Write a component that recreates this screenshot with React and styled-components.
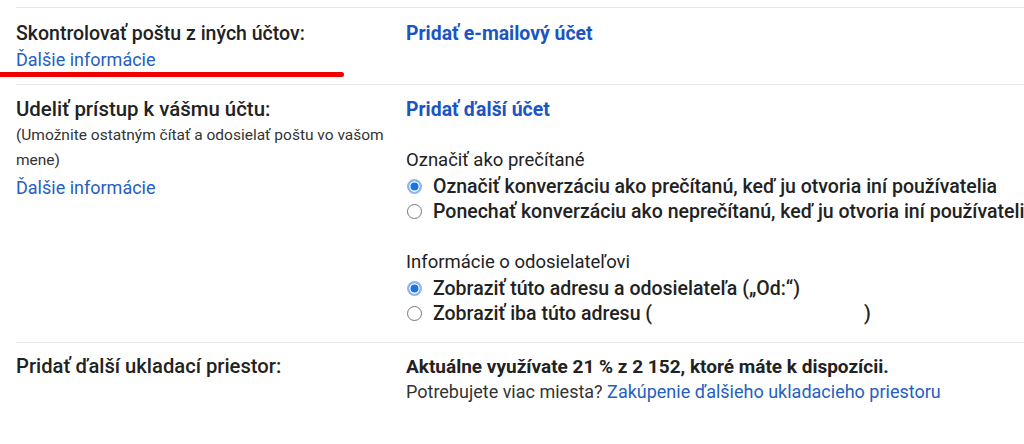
import React from "react";
import styled, { createGlobalStyle } from "styled-components";

const GlobalStyle = createGlobalStyle`
  html, body {
    margin: 0;
    padding: 0;
    background: #ffffff;
  }
  body {
    font-family: Roboto, "Noto Sans", Arial, sans-serif;
    color: #202124;
    overflow: hidden;
  }
`;

const Page = styled.div`
  position: relative;
  width: 1024px;
  height: 444px;
  overflow: hidden;
  padding-top: 7px;
  box-sizing: border-box;
`;

const Row = styled.div`
  display: grid;
  grid-template-columns: 390px 1fr;
  margin-left: 16px;
  border-top: 1px solid #e6e6e6;
  padding: ${(p) => p.$pad || "13px 0 13px 0"};
  font-size: 18px;
  line-height: 25.5px;
`;

const Label = styled.div`
  font-size: ${(p) => p.$size || "19.6px"};
  font-weight: 500;
  color: #222;
  white-space: nowrap;
`;

const Note = styled.div`
  font-size: 15.5px;
  line-height: 25.5px;
  color: #333;
  width: 380px;
`;

const InfoLink = styled.a`
  display: block;
  color: #2460c0;
  text-decoration: none;
  font-size: 18px;
  margin-top: ${(p) => p.$top || "0"};
`;

const Side = styled.div`
  display: flex;
  flex-direction: column;
  white-space: nowrap;
`;

const ActionLink = styled.a`
  color: #1a55c2;
  font-size: 19.4px;
  font-weight: 700;
  text-decoration: none;
`;

const Group = styled.div`
  margin-top: 25.5px;
`;

const GroupTitle = styled.div`
  color: #222;
  font-size: 18.5px;
`;

const Option = styled.label`
  display: flex;
  align-items: center;
  gap: 11px;
  padding-left: 1px;
  font-size: 19.5px;
  font-weight: 500;
  color: #222;
`;

const Radio = styled.span`
  width: 15px;
  height: 15px;
  border-radius: 50%;
  box-sizing: border-box;
  flex: none;
  border: ${(p) => (p.$on ? "2px solid #8fb6ee" : "1px solid #777")};
  background: ${(p) => (p.$on ? "#1a73e8" : "#fff")};
  box-shadow: ${(p) => (p.$on ? "inset 0 0 0 1.5px #fff" : "none")};
`;

const Strong = styled.div`
  font-size: 19px;
  font-weight: 700;
  color: #222;
`;

const Plain = styled.div`
  color: #333;
  font-size: 18px;
`;

const BuyLink = styled.a`
  color: #2460c0;
  text-decoration: none;
`;

const Gap = styled.span`
  display: inline-block;
  width: 190px;
`;

const Marker = styled.div`
  position: absolute;
  left: 0;
  top: 72px;
  width: 344px;
  height: 5px;
  background: #f20000;
  border-radius: 0 3px 3px 0;
`;

export default function App() {
  return (
    <Page>
      <GlobalStyle />
      <Row $pad="13px 0 12px 0">
        <div>
          <Label $size="19.5px">Skontrolovať poštu z iných účtov:</Label>
          <InfoLink>Ďalšie informácie</InfoLink>
        </div>
        <Side>
          <div>
            <ActionLink>Pridať e-mailový účet</ActionLink>
          </div>
        </Side>
      </Row>
      <Row $pad="12px 0 15px 0">
        <div>
          <Label $size="20.4px">Udeliť prístup k vášmu účtu:</Label>
          <Note>(Umožnite ostatným čítať a odosielať poštu vo vašom mene)</Note>
          <InfoLink $top="1px">Ďalšie informácie</InfoLink>
        </div>
        <Side>
          <div>
            <ActionLink>Pridať ďalší účet</ActionLink>
          </div>
          <Group>
            <GroupTitle>Označiť ako prečítané</GroupTitle>
            <Option>
              <Radio $on />
              Označiť konverzáciu ako prečítanú, keď ju otvoria iní používatelia
            </Option>
            <Option>
              <Radio />
              Ponechať konverzáciu ako neprečítanú, keď ju otvoria iní používatelia
            </Option>
          </Group>
          <Group>
            <GroupTitle>Informácie o odosielateľovi</GroupTitle>
            <Option>
              <Radio $on />
              Zobraziť túto adresu a odosielateľa („Od:“)
            </Option>
            <Option>
              <Radio />
              Zobraziť iba túto adresu (<Gap />)
            </Option>
          </Group>
        </Side>
      </Row>
      <Row $pad="11px 0 0 0">
        <div>
          <Label $size="20.2px">Pridať ďalší ukladací priestor:</Label>
        </div>
        <Side>
          <Strong>Aktuálne využívate 21 % z 2 152, ktoré máte k dispozícii.</Strong>
          <Plain>
            Potrebujete viac miesta?{" "}
            <BuyLink>Zakúpenie ďalšieho ukladacieho priestoru</BuyLink>
          </Plain>
        </Side>
      </Row>
      <Marker />
    </Page>
  );
}
